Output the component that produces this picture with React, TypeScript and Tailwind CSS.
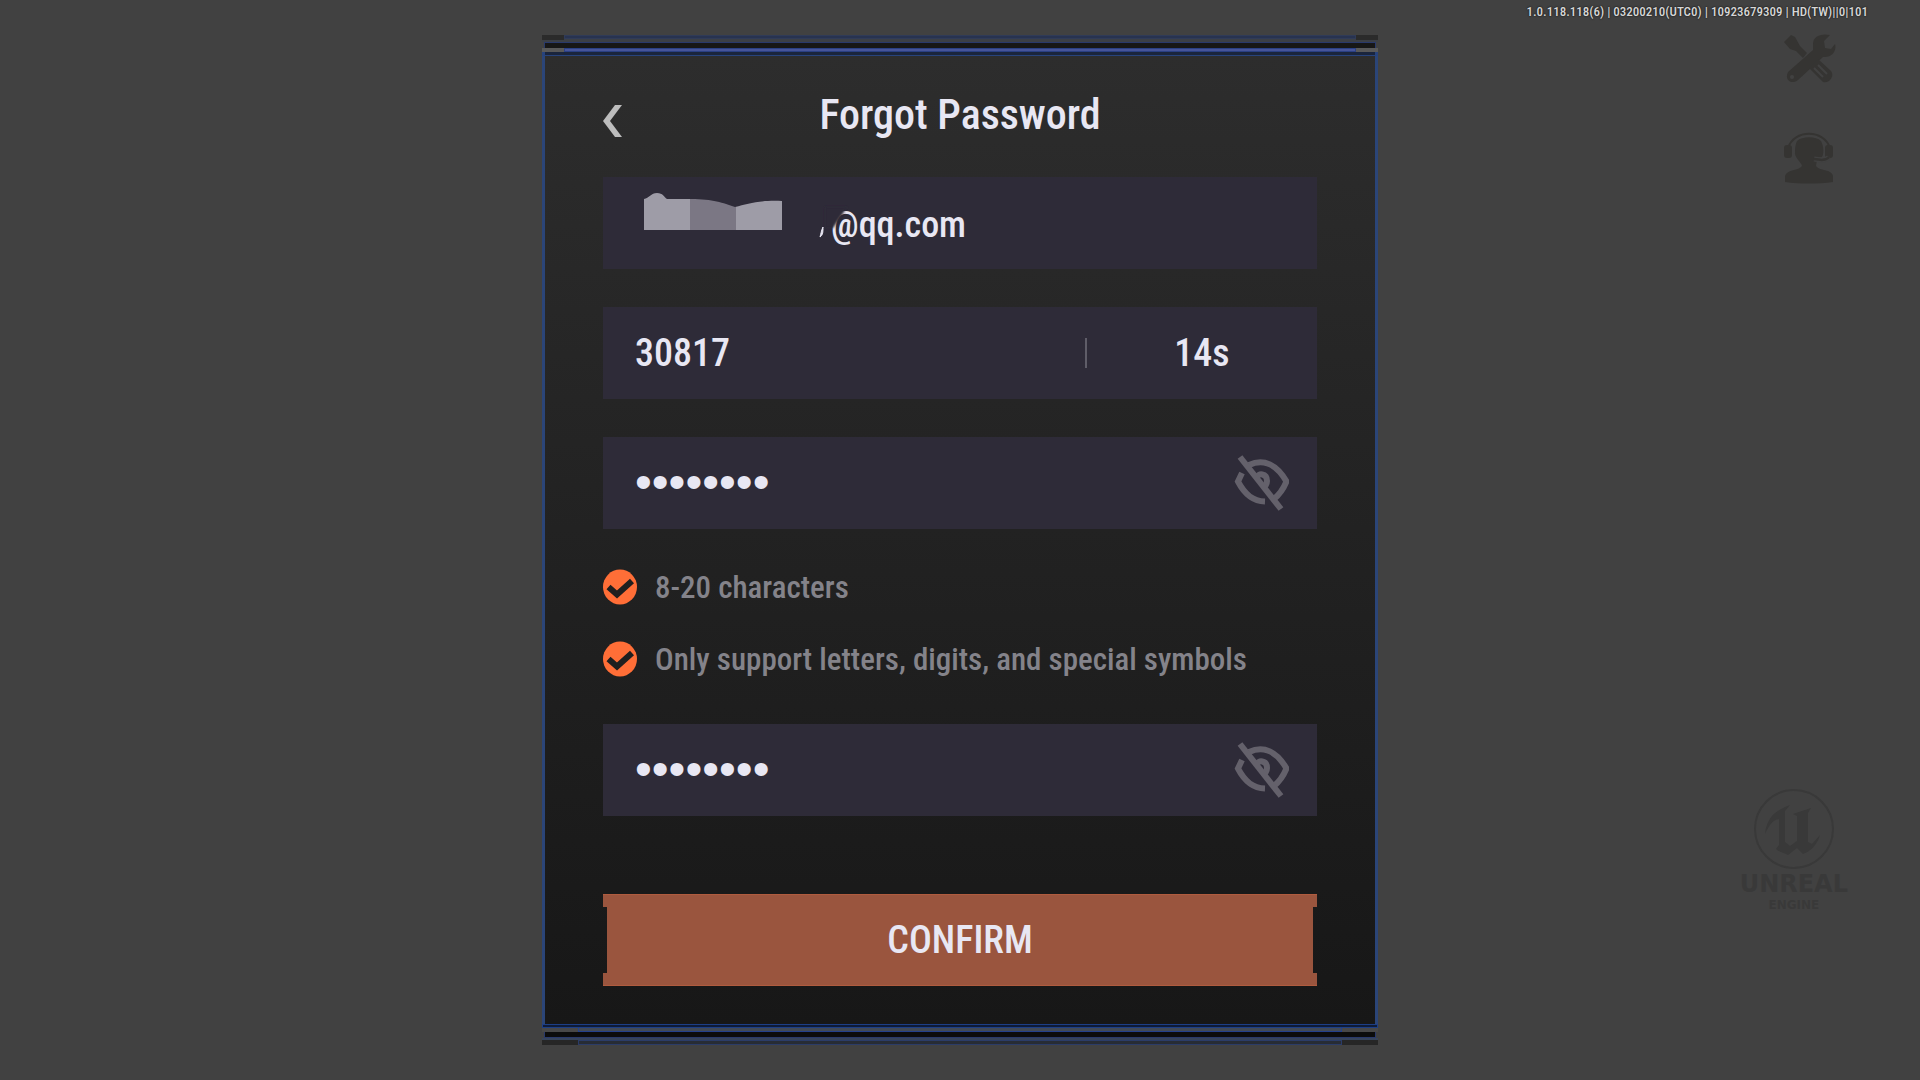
import { useState } from "react";

const hints = [
  { id: 1, text: "8-20 characters" },
  { id: 2, text: "Only support letters, digits, and special symbols" },
];

const EyeOffIcon = () => (
  <svg width="56" height="58" viewBox="0 0 56 58" fill="none" stroke="#64616b" strokeWidth="6">
    <path d="M16 11 C31 4 44 11 53.5 27.5 C50 36 46 41 41 45" />
    <path d="M9 19 L5 27.5 C12 41 20 47 32 47.500" />
    <path d="M23 24 C25 18.500 34 19 34 27 C34 30 32 33 30 34" strokeWidth="6" />
    <path d="M7 3 L48 55" />
  </svg>
);

const CheckIcon = () => (
  <svg width="34" height="36" viewBox="0 0 34 36" fill="none">
    <ellipse cx="17" cy="18" rx="17" ry="17.500" fill="#ff6e37" />
    <path d="M5.500 18 L14 25.500 L29 12" stroke="#1f1f1f" strokeWidth="6" />
  </svg>
);

const ToolsIcon = () => (
  <svg width="52" height="50" viewBox="0 0 52 50" fill="#353432">
    <path d="M0 8 L7 1 L11 3 L16 12 L23 19 L19 24 L12 17 L6 15 Z" />
    <path d="M29 10 C29 3 36 -1 46 1 L40 7 L41 14 L47 15 L51 10 C53 17 48 24 39 23 L14 46 C8 51 0 46 4 38 L29 16 Z" />
    <circle cx="8" cy="43" r="2" fill="#414141" />
    <path d="M25 34 L34 25 L47 37 C51 42 45 50 39 48 Z" />
    <path d="M30 34 L39 43 M34 31 L43 40" stroke="#414141" strokeWidth="2" />
  </svg>
);

const SupportIcon = () => (
  <svg width="50" height="52" viewBox="0 0 50 52" fill="#353432">
    <path d="M4 16 C10 -3 40 -3 46 16" fill="none" stroke="#353432" strokeWidth="2" />
    <rect x="0" y="13" width="8" height="13" rx="3" />
    <rect x="41" y="13" width="8" height="13" rx="3" />
    <path d="M13 9 C18 4 32 4 37 9 C40 15 40 22 38 25 L33 28 L32 34 C35 39 48 37 49 44 L49 50 C34 52 16 52 1 50 L1 44 C3 37 15 39 18 34 C17 30 12 27 11 22 C11 17 11 13 13 9 Z" />
    <path d="M45 25 C42 29 36 28 30 27" fill="none" stroke="#414141" strokeWidth="5" />
    <path d="M45 25 C42 29 36 28 29 27" fill="none" stroke="#353432" strokeWidth="2.500" />
  </svg>
);

const UnrealMark = () => (
  <svg width="84" height="82" viewBox="0 0 84 82" fill="#393939">
    <circle cx="42" cy="41" r="39" fill="none" stroke="#393939" strokeWidth="2" />
    <path d="M13 46 C15 29 24 22 38 17 L33 23 L33 54 L38 58 L45 53 L45 28 L41 26 L59 20 L56 25 L56 54 L60 56 L68 47 C65 58 57 64 51 66 L45 60 L36 67 C32 65 27 64 24 61 L27 57 L27 31 C20 32 17 38 13 46 Z" />
  </svg>
);

const TopFrame = () => (
  <div>
    <div className="flex h-[7px] items-start bg-[#3b3f46]">
      <span className="h-[5px] w-[22px] bg-[#2b2b2b]" />
      <span className="h-1 flex-1 border border-[#303b57] bg-[#283350]" />
      <span className="h-[5px] w-[22px] bg-[#2b2b2b]" />
    </div>
    <div className="mx-[2px] h-[6px] border-x border-t border-[#29396b] bg-[#171717]" />
    <div className="flex h-1">
      <span className="w-[22px] bg-[#595959]" />
      <span className="flex-1 border border-[#2a4084] bg-[#46549a]" />
      <span className="w-[22px] bg-[#595959]" />
    </div>
    <div className="h-1 border-x-3 border-b border-[#27437c] bg-[#1a253d]" />
  </div>
);

const BottomFrame = () => (
  <div>
    <div className="h-1 border border-[#1d3f86] bg-[#0e1b38]" />
    <div className="flex h-1">
      <span className="w-9 bg-[#484848]" />
      <span className="flex-1 border-x border-b border-[#24418c] bg-[#424a55]" />
      <span className="w-9 bg-[#484848]" />
    </div>
    <div className="mx-[2px] h-[6px] border-x border-b border-[#29396b] bg-[#0c0c0c]" />
    <div className="h-[2px] bg-[#37445a]" />
    <div className="flex h-[5px]">
      <span className="w-9 bg-[#262626]" />
      <span className="flex-1 border border-[#2b3c68] bg-[#272c35]" />
      <span className="w-9 bg-[#262626]" />
    </div>
  </div>
);

const PasswordField = ({ label }: { label: string }) => {
  const [visible, setVisible] = useState(false);
  return (
    <div className="flex h-[92px] items-center bg-[#2e2b38] pr-7 pl-8">
      <input
        type={visible ? "text" : "password"}
        aria-label={label}
        defaultValue="abcd1234"
        className="h-full min-w-0 flex-1 bg-transparent pb-1 font-['Liberation_Sans'] text-5xl font-normal outline-none"
      />
      <button type="button" aria-label="Show password" onClick={() => setVisible(!visible)}>
        <EyeOffIcon />
      </button>
    </div>
  );
};

const App = () => {
  return (
    <div className="grid min-h-screen grid-cols-[1fr_minmax(0,836px)_1fr] bg-[#414141] font-['Roboto_Condensed','Liberation_Sans_Narrow',sans-serif] font-medium text-[#e8e7f3]">
      <main className="col-start-2 py-[35px]">
        <TopFrame />
        <form
          onSubmit={(e) => e.preventDefault()}
          className="flex flex-col border-x-3 border-[#2b4578] bg-linear-to-b from-[#2d2d2d] to-[#171717] px-[58px] pb-[38px]"
        >
          <header className="grid h-[121px] grid-cols-[20px_1fr_20px] items-center">
            <button type="button" aria-label="Back" className="pt-2">
              <svg width="20" height="32" viewBox="0 0 20 32" fill="#bdbdbd">
                <path d="M12 0 H19 L7 16 L19 32 H12 L0 16 Z" />
              </svg>
            </button>
            <h1 className="pb-1 text-center text-[42px] leading-none">Forgot Password</h1>
          </header>

          <div className="flex flex-col gap-[38px]">
            <div className="relative h-[92px] bg-[#2e2b38]">
              <input
                type="text"
                aria-label="Email"
                defaultValue="@qq.com"
                className="h-full w-full bg-transparent pt-1 pr-8 pl-[228px] text-4xl outline-none"
              />
              <svg className="pointer-events-none absolute top-0 left-0" width="260" height="92" viewBox="0 0 260 92">
                <defs>
                  <filter id="soften" x="-10%" y="-10%" width="120%" height="120%">
                    <feGaussianBlur stdDeviation="1" />
                  </filter>
                  <clipPath id="mosaic">
                    <path d="M41 22 C46 21 48 16 54 16 C60 16 61 20 64 22 H88 C110 22 120 26 132 30 C145 27 155 23 179 24 V53 H41 Z" />
                  </clipPath>
                </defs>
                <g clipPath="url(#mosaic)">
                  <rect x="41" y="10" width="46" height="43" fill="#9e9ca7" />
                  <rect x="87" y="10" width="46" height="43" fill="#7b7784" />
                  <rect x="133" y="10" width="46" height="43" fill="#9e9ca7" />
                </g>
                <path d="M220 50 C220 55 220 58 217 60 C218 57 218 54 220 50 Z" fill="#e8e7f3" stroke="#e8e7f3" />
                <path d="M222 30 H244 L239 38 L230 51 H222 Z" fill="#2e2b38" filter="url(#soften)" />
              </svg>
            </div>

            <div className="flex h-[92px] items-center bg-[#2e2b38]">
              <input
                type="text"
                aria-label="Verification code"
                defaultValue="30817"
                className="h-full min-w-0 flex-1 bg-transparent pl-8 text-[38px] outline-none"
              />
              <span className="h-[30px] w-[2px] bg-[#5f5d68]" />
              <span className="w-[230px] text-center text-[38px] leading-none">14s</span>
            </div>

            <PasswordField label="New password" />
          </div>

          <ul className="mt-10 mb-[47px] flex flex-col gap-9">
            {hints.map((hint) => (
              <li key={hint.id} className="flex h-9 items-center gap-[18px] text-[31px] leading-none text-[#84838a]">
                <CheckIcon />
                <span className="whitespace-nowrap">{hint.text}</span>
              </li>
            ))}
          </ul>

          <PasswordField label="Confirm password" />

          <button
            type="submit"
            className="mt-[78px] h-[92px] w-full border-y border-[#b05c3f] bg-[#9a553e] text-[38px] leading-none [clip-path:polygon(0_0,100%_0,100%_13px,calc(100%-4px)_13px,calc(100%-4px)_79px,100%_79px,100%_100%,0_100%,0_79px,4px_79px,4px_13px,0_13px)]"
          >
            CONFIRM
          </button>
        </form>
        <BottomFrame />
      </main>

      <aside className="flex flex-col items-end">
        <p className="mr-[52px] h-[34px] pt-1 text-[13px] leading-4 whitespace-nowrap text-[#d6d6d6] [text-shadow:0_0_2px_#000]">
          1.0.118.118(6) | 03200210(UTC0) | 10923679309 | HD(TW)||0|101
        </p>
        <button type="button" aria-label="Repair" className="mr-[84px]">
          <ToolsIcon />
        </button>
        <button type="button" aria-label="Customer service" className="mt-12 mr-[86px]">
          <SupportIcon />
        </button>
        <div className="mt-auto mr-[72px] mb-[168px] flex flex-col items-center font-['DejaVu_Sans'] font-bold text-[#393939]">
          <UnrealMark />
          <span className="text-2xl leading-7">UNREAL</span>
          <span className="text-xs leading-[14px]">ENGINE</span>
        </div>
      </aside>
    </div>
  );
};

export default App;
